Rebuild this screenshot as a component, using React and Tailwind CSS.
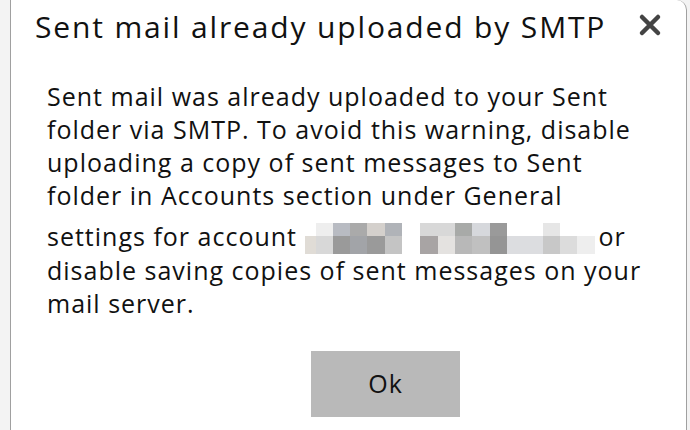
import React from 'react';

const topRow = [
  ['w-[11px]', 'bg-white'],
  ['w-[17px]', 'bg-[#eeeeee]'],
  ['w-[17px]', 'bg-[#b8bbc2]'],
  ['w-[17px]', 'bg-[#aaaaaa]'],
  ['w-[18px]', 'bg-[#d4d0cc]'],
  ['w-[17px]', 'bg-[#b0b3b8]'],
  ['w-[18px]', 'bg-white'],
  ['w-[35px]', 'bg-[#d8d8d8]'],
  ['w-[17px]', 'bg-[#a8aaa8]'],
  ['w-[18px]', 'bg-[#d6d8dc]'],
  ['w-[17px]', 'bg-[#9a9a9a]'],
  ['w-[36px]', 'bg-white'],
  ['w-[17px]', 'bg-[#e6e6e6]'],
  ['w-[35px]', 'bg-white'],
];

const bottomRow = [
  ['w-[11px]', 'bg-[#e0dcd6]'],
  ['w-[17px]', 'bg-[#d8d8d8]'],
  ['w-[17px]', 'bg-[#9a9a9a]'],
  ['w-[17px]', 'bg-[#a2a4a8]'],
  ['w-[18px]', 'bg-[#9a9a9a]'],
  ['w-[17px]', 'bg-[#c4c4c4]'],
  ['w-[18px]', 'bg-white'],
  ['w-[18px]', 'bg-[#a8a4a4]'],
  ['w-[17px]', 'bg-[#e4e2e0]'],
  ['w-[17px]', 'bg-[#b8b8b8]'],
  ['w-[18px]', 'bg-[#c0c0c0]'],
  ['w-[17px]', 'bg-[#959595]'],
  ['w-[18px]', 'bg-[#dcdde0]'],
  ['w-[18px]', 'bg-[#dcdde0]'],
  ['w-[17px]', 'bg-[#c8c8c8]'],
  ['w-[17px]', 'bg-[#dcdcdc]'],
  ['w-[18px]', 'bg-[#eeeeee]'],
];

// pixelated account address (redacted in the screenshot)
function Blurred() {
  return (
    <span className="inline-block overflow-hidden align-[-8px] mt-[11px] mr-[4px]">
      <span className="flex h-[13px]">
        {topRow.map(([w, bg], i) => (
          <span key={i} className={`${w} ${bg}`} />
        ))}
      </span>
      <span className="flex h-[18px]">
        {bottomRow.map(([w, bg], i) => (
          <span key={i} className={`${w} ${bg}`} />
        ))}
      </span>
    </span>
  );
}

export default function App() {
  return (
    <div className="w-[690px] h-[430px] bg-[#f3f3f3] flex font-['Open_Sans','Noto_Sans_CJK_SC',sans-serif] overflow-hidden">
      <div className="ml-[10px] w-[677px] h-full bg-white border-l border-r border-[#a0a0a0] rounded-tr-[10px] flex flex-col">
        {/* Header */}
        <div className="flex items-start justify-between pl-[24px] pr-[24px] pt-[8px]">
          <h1 className="text-[30px] leading-[38px] tracking-[1.85px] text-[#111]">Sent mail already uploaded by SMTP</h1>
          <svg className="w-[24px] h-[24px] mt-[5px] text-[#444]" viewBox="0 0 24 24" fill="none" stroke="currentColor">
            <path strokeLinecap="round" strokeWidth={4.5} d="M4 4l16 16M20 4L4 20" />
          </svg>
        </div>

        {/* Body */}
        <div className="pl-[36px] pr-[20px] pt-[34px] text-[25px] leading-[33px] tracking-[1px] text-[#111] whitespace-nowrap">
          <p>
            Sent mail was already uploaded to your Sent
            <br />
            folder via SMTP. To avoid this warning, disable
            <br />
            uploading a copy of sent messages to Sent
            <br />
            folder in Accounts section under General
            <br />
            settings for account <Blurred />or
            <br />
            disable saving copies of sent messages on your
            <br />
            mail server.
          </p>
        </div>

        {/* Footer */}
        <div className="flex mt-auto mb-[13px] pl-[300px]">
          <button className="w-[149px] h-[66px] bg-[#b9b9b9] text-[25px] tracking-[1px] text-[#111]">Ok</button>
        </div>
      </div>
    </div>
  );
}
